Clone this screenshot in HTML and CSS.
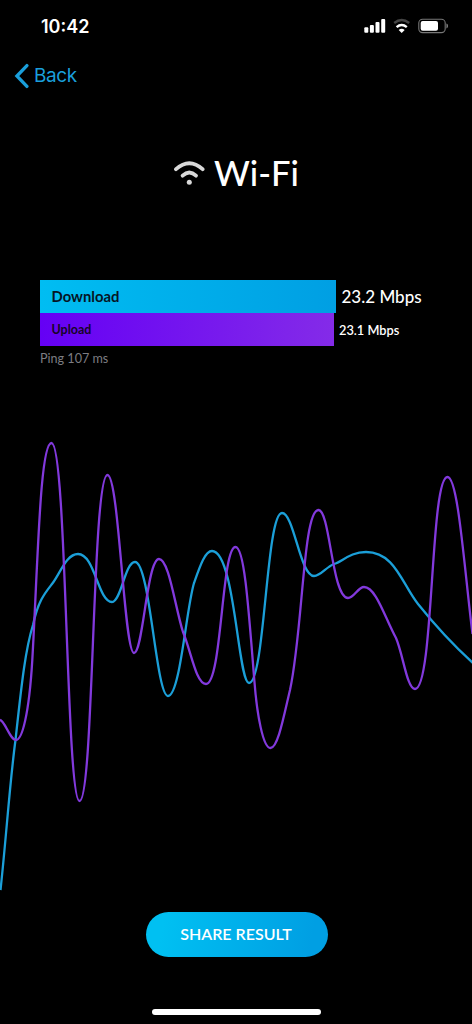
FILE: index.html
```html
<!DOCTYPE html>
<html lang="en">
<head>
<meta charset="utf-8">
<title>Wi-Fi speed result</title>
<link rel="stylesheet" href="styles.css">
</head>
<body>
<main class="screen">
  <header class="status">
    <span class="time">10:42</span>
    <svg class="status-icons" width="84" height="16" viewBox="364 18 84 16" aria-hidden="true">
      <g fill="#fff">
        <rect x="364.3" y="27.3" width="4" height="5.4" rx="1"/>
        <rect x="369.9" y="25" width="4" height="7.7" rx="1"/>
        <rect x="375.5" y="22" width="4" height="10.7" rx="1"/>
        <rect x="381.2" y="19" width="4" height="13.7" rx="1"/>
        <path d="M401.7 33 L398.7 30 Q401.7 27.5 404.7 30 Z"/>
      </g>
      <path d="M394.2 22.9 Q401.7 17.2 409.2 22.9" fill="none" stroke="#444" stroke-width="2.5"/>
      <path d="M396.6 27.1 Q401.7 23 406.8 27.1" fill="none" stroke="#fff" stroke-width="2.5"/>
      <rect x="418.8" y="19.2" width="26.4" height="13.4" rx="3.8" fill="none" stroke="#777" stroke-width="1.1"/>
      <rect x="420.7" y="21" width="17.3" height="9.8" rx="2" fill="#fff"/>
      <path d="M446.4 23.6 Q448.2 24.3 448.2 26 Q448.2 27.7 446.4 28.4 Z" fill="#777"/>
    </svg>
  </header>
  <nav class="nav">
    <svg width="15" height="26" viewBox="0 0 15 26" aria-hidden="true"><path d="M12.9 2.6 L2.9 13 L12.9 23.4" fill="none" stroke="#1a9fdb" stroke-width="3.3" stroke-linecap="round" stroke-linejoin="miter"/></svg>
    <span class="back">Back</span>
  </nav>
  <h1 class="title">
    <svg width="32" height="26" viewBox="0 0 32 26" aria-hidden="true">
      <g fill="none" stroke="#d9d9d9" stroke-width="3.8" stroke-linecap="round"><path d="M3 9.2 Q16.3 -2.8 29.6 9.2"/><path d="M9.6 15.7 Q16.3 9.5 23 15.7"/></g>
      <circle cx="16.3" cy="22.2" r="2.5" fill="#d9d9d9"/>
    </svg>
    <span>Wi-Fi</span>
  </h1>
  <section class="results">
    <div class="row download"><div class="bar">Download</div><span class="value">23.2 Mbps</span></div>
    <div class="row upload"><div class="bar">Upload</div><span class="value">23.1 Mbps</span></div>
    <p class="ping">Ping 107 ms</p>
  </section>
  <svg class="chart" width="472" height="470" viewBox="0 430 472 470" aria-hidden="true">
    <path class="line-down" d="M0.5 890 C6 840 10 780 15.5 740 C21 690 25 650 33 625 C38 601 45 593 52 584 C60 574 66 554 78 554 C95 554 98 602 112 602 C121 602 125 562 135 562 C150 562 156 696 168 696 C180 696 186 610 194 583 C200 566 205 551 212 551 C235 551 238 683 249 683 C265 683 266 513 282 513 C294 513 300 576 314 576 C321 576 326 567 334 564 C342 562 350 552 366 552 C395 552 402 584 418 604 C434 624 452 644 473 663"/>
    <path class="line-up" d="M0 720 C5 721 10 740 16 740 C22 740 29 715 32.3 660 C38 560 40 443 51.5 443 C67 443 66 801 79.5 801 C94 801 92 475 107.5 475 C119 475 124 653 134 653 C143 653 147 559 159 559 C169 559 175 607 183 632 C191 651 196 684 206 684 C222 684 221.5 547 235.5 547 C244 547 248 600 254.3 680 C257 715 263 748 270.5 748 C278 748 284 715 290 690 C303 630 303 510 318.5 510 C330 510 332 598 348 598 C354 598 358 587 364 587 C376 587 385 618 396 638 C403 654 407 689 415 689 C434 689 430 477 447.5 477 C458 477 464 565 472.5 634"/>
  </svg>
  <footer class="footer">
    <button class="share">SHARE RESULT</button>
    <div class="home"></div>
  </footer>
</main>
</body>
</html>
```
FILE: styles.css
```css
* { box-sizing: border-box; }
body { margin: 0; background: #000; }
.screen { display: flex; flex-direction: column; width: 472px; height: 1024px; overflow: hidden; background: #000; color: #fff; font-family: Lato, sans-serif; }
.status { display: flex; justify-content: space-between; align-items: center; height: 52px; padding: 0 24px 0 41px; }
.time { padding-top: 1px; font: 600 18px/24px Inter, sans-serif; letter-spacing: 0; }
.status-icons, .nav svg, .title svg, .chart { display: block; flex: none; }
.nav { display: flex; align-items: center; gap: 5px; height: 48px; padding-left: 14px; color: #1a9fdb; }
.back { font: 400 19px/24px Inter, sans-serif; letter-spacing: -0.4px; }
.title { display: flex; justify-content: center; align-items: center; gap: 9px; height: 60px; margin: 43px 0 0; font-size: 34.5px; font-weight: 500; line-height: 44px; }
.results { height: 227px; padding: 77px 40px 0; }
.row { display: flex; align-items: center; height: 33px; white-space: nowrap; }
.bar { display: flex; align-items: center; height: 33px; padding: 0 0 1px 11.5px; font-weight: 700; color: #061526; }
.download .bar { width: 296px; font-size: 14.8px; background: linear-gradient(90deg, #00bdf2, #009fe3); }
.upload .bar { width: 293.5px; padding-bottom: 0; font-size: 12.5px; color: #160528; background: linear-gradient(90deg, #6500f5, #842be8); }
.value { margin-left: 5.5px; font-weight: 500; }
.download .value { font-size: 17px; }
.upload .value { font-size: 12.8px; font-weight: 600; }
.ping { margin: 4px 0 0; font-size: 12.6px; line-height: 18px; color: #7d7d82; }
.chart path { fill: none; stroke-width: 2.3; }
.chart .line-down { stroke: #1b9fd8; }
.chart .line-up { stroke: #8239dc; }
.footer { display: flex; flex-direction: column; align-items: center; padding: 12px 0 0 1px; }
.share { width: 182px; height: 45px; padding: 0 1px 1px 0; border: 0; border-radius: 23px; background: linear-gradient(100deg, #00c0f2 10%, #009fe3 90%); color: #fff; font: 600 16px/20px Lato, sans-serif; }
.home { width: 169px; height: 6px; margin-top: 52px; border-radius: 3px; background: #fff; }
```
